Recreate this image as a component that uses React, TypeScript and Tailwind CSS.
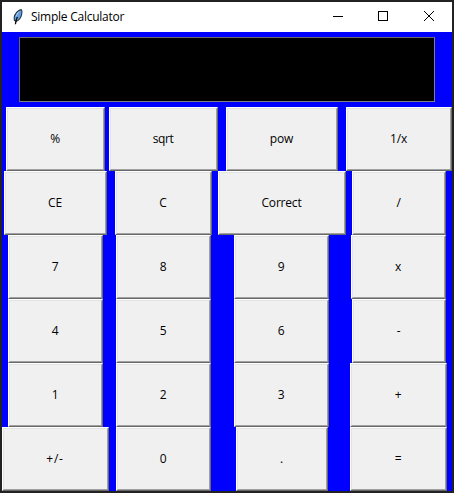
import React from "react";

type Key = { label: string; box: string; spacing?: string };

const keys: Key[] = [
  { label: "%", box: "ml-[4px] w-[99px]" },
  { label: "sqrt", box: "w-[109px]", spacing: "tracking-[-0.45px]" },
  { label: "pow", box: "ml-[8px] w-[112px]" },
  { label: "1/x", box: "w-[106px]" },
  { label: "CE", box: "ml-[2px] w-[103px]" },
  { label: "C", box: "ml-[6px] w-[97px]" },
  { label: "Correct", box: "w-[128px]" },
  { label: "/", box: "ml-[6px] w-[94px]" },
  { label: "7", box: "ml-[6px] w-[95px]" },
  { label: "8", box: "ml-[7px] w-[95px]" },
  { label: "9", box: "ml-[16px] w-[95px]" },
  { label: "x", box: "ml-[5px] w-[95px]" },
  { label: "4", box: "ml-[6px] w-[95px]" },
  { label: "5", box: "ml-[7px] w-[95px]" },
  { label: "6", box: "ml-[16px] w-[95px]" },
  { label: "-", box: "ml-[6px] w-[94px]" },
  { label: "1", box: "ml-[6px] w-[95px]" },
  { label: "2", box: "ml-[7px] w-[95px]" },
  { label: "3", box: "ml-[16px] w-[95px]" },
  { label: "+", box: "ml-[4px] w-[97px]" },
  { label: "+/-", box: "w-[107px]", spacing: "tracking-[0.8px]" },
  { label: "0", box: "ml-[7px] w-[95px]" },
  { label: ".", box: "ml-[18px] w-[92px]" },
  { label: "=", box: "ml-[4px] w-[97px]" },
];

function Feather() {
  return (
    <svg width="16" height="16" viewBox="0 0 16 16" className="shrink-0">
      <path d="M10.2 .6 C6.8 1.2 3.8 4.8 3.2 8.4 L3.3 11.2 L5 12.4 C8.4 11.2 10 9 10.6 5.5 C11 3.4 11.2 1.3 10.2 .6Z" fill="#5f9fe2" stroke="#27313b" strokeWidth="1.1" />
      <path d="M8.6 2 C6.6 3.2 4.8 6 4.4 8.6 C5.6 6.8 7.2 4.2 8.6 2Z" fill="#c5dcf3" />
      <path d="M6.4 8 C5.3 10 4.7 12 4.4 15.2" fill="none" stroke="#0a0a0a" strokeWidth="1.3" />
    </svg>
  );
}

function CalcKey({ label, box, spacing = "tracking-[-0.2px]" }: Key) {
  return (
    <button
      className={`${box} h-16 border border-t-white border-l-white border-r-[#696969] border-b-[#696969] bg-[#f0f0f0]`}
    >
      <span
        className={`${spacing} flex h-full w-full items-center justify-center border border-t-[#e3e3e3] border-l-[#e3e3e3] border-r-[#a0a0a0] border-b-[#a0a0a0] pr-px text-[12px] leading-4 text-black`}
      >
        {label}
      </span>
    </button>
  );
}

export default function App() {
  return (
    <div className="h-[493px] w-[454px] bg-[#222222] p-[2px] font-['Open_Sans','Noto_Sans',sans-serif]">
      <div className="flex h-[489px] w-[450px] flex-col bg-[#0000ff]">
        <header className="flex h-[30px] shrink-0 items-center bg-white pl-[9px]">
          <Feather />
          <h1 className="ml-1 flex-1 text-[12px] leading-4 tracking-[-0.25px] whitespace-nowrap text-black">
            Simple Calculator
          </h1>
          <svg width="138" height="30" viewBox="0 0 138 30" className="shrink-0" fill="none" stroke="#000" shapeRendering="crispEdges">
            <path d="M19 14.5H29" />
            <rect x="64.5" y="9.5" width="9" height="9" />
            <path d="M110 9L120 19M120 9L110 19" shapeRendering="auto" />
          </svg>
        </header>
        <div className="mt-[5px] ml-[17px] h-[65px] w-[416px] shrink-0 border border-t-[#696969] border-l-[#696969] border-r-[#808080] border-b-[#808080] bg-black" />
        <main className="mt-[5px] grid grid-cols-[107px_109px_128px_106px]">
          {keys.map((k) => (
            <CalcKey key={k.label} {...k} />
          ))}
        </main>
      </div>
    </div>
  );
}
